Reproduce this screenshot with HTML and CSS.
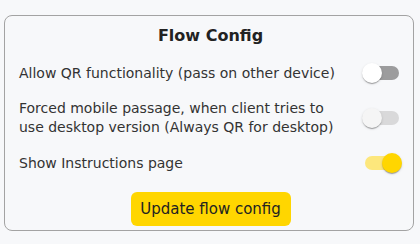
FILE: index.html
```html
<!DOCTYPE html>
<html lang="en">
<head>
  <meta charset="UTF-8">
  <meta name="viewport" content="width=device-width, initial-scale=1.0">
  <title>Flow Config</title>
  <link rel="stylesheet" href="styles.css">
</head>
<body>
  <div class="card">
    <h2 class="title">Flow Config</h2>
    <div class="row">
      <span class="label">Allow QR functionality (pass on other device)</span>
      <label class="switch">
        <input type="checkbox">
        <span class="track"></span>
        <span class="thumb"></span>
      </label>
    </div>
    <div class="row">
      <span class="label">Forced mobile passage, when client tries to use desktop version (Always QR for desktop)</span>
      <label class="switch disabled">
        <input type="checkbox" disabled>
        <span class="track"></span>
        <span class="thumb"></span>
      </label>
    </div>
    <div class="row">
      <span class="label">Show Instructions page</span>
      <label class="switch">
        <input type="checkbox" checked>
        <span class="track"></span>
        <span class="thumb"></span>
      </label>
    </div>
    <div class="actions">
      <button class="update">Update flow config</button>
    </div>
  </div>
</body>
</html>
```

FILE: styles.css
```css
body {
  font-family: 'DejaVu Sans', sans-serif;
  background-color: #f7f8fa;
  margin: 0;
  padding: 15px 6px 0 4px;
  color: #333;
}

.card {
  border: 1px solid #a3a3a3;
  border-radius: 8px;
  padding: 9px 11px 8px 14px;
  height: 216px;
  box-sizing: border-box;
}

.title {
  font-size: 16px;
  font-weight: bold;
  color: #222;
  text-align: center;
  line-height: 22px;
  margin: 0 0 8px;
}

.row {
  display: flex;
  align-items: center;
  justify-content: space-between;
  padding: 8px 0;
  font-size: 14px;
  line-height: 19px;
}

.label {
  flex: 1;
  padding-right: 14px;
}

.switch {
  position: relative;
  width: 40px;
  height: 20px;
  flex-shrink: 0;
  cursor: pointer;
}

.switch input {
  display: none;
}

.track {
  position: absolute;
  left: 3px;
  top: 3px;
  width: 34px;
  height: 14px;
  border-radius: 7px;
  background-color: #9c9c9d;
}

.thumb {
  position: absolute;
  left: 0;
  top: 0;
  width: 20px;
  height: 20px;
  border-radius: 50%;
  background-color: #fff;
  box-shadow: 0 2px 1px -1px rgba(0, 0, 0, 0.2), 0 1px 1px rgba(0, 0, 0, 0.14), 0 1px 3px rgba(0, 0, 0, 0.12);
}

.switch input:checked ~ .track {
  background-color: #fde77c;
}

.switch input:checked ~ .thumb {
  left: 20px;
  background-color: #ffd600;
}

.switch.disabled .track {
  background-color: #d9d9da;
}

.switch.disabled .thumb {
  background-color: #f5f5f5;
}

.actions {
  display: flex;
  justify-content: center;
  margin-top: 11px;
}

.update {
  background-color: #ffd600;
  border: none;
  border-radius: 6px;
  color: #222;
  font-family: inherit;
  font-size: 15px;
  width: 160px;
  height: 34px;
  cursor: pointer;
}
```
